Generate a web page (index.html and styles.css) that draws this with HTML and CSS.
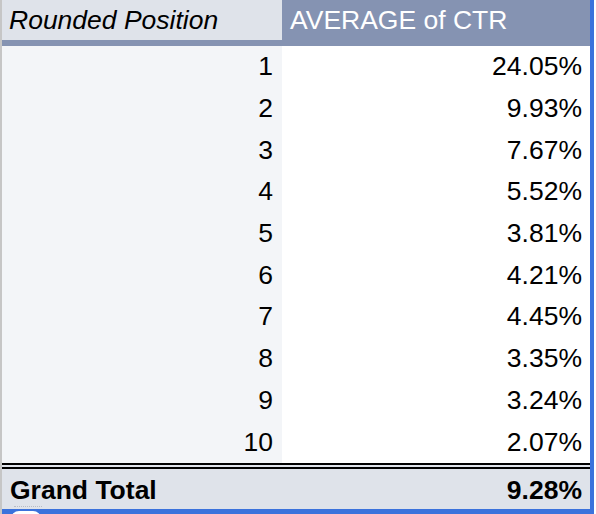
FILE: index.html
```html
<!DOCTYPE html>
<html>
<head>
<meta charset="utf-8">
<link rel="stylesheet" href="styles.css">
</head>
<body>
<div class="sheet">
  <div class="grid">
    <div class="head head-left">Rounded Position</div>
    <div class="head head-right">AVERAGE of CTR</div>

    <div class="cell key">1</div><div class="cell val">24.05%</div>
    <div class="cell key">2</div><div class="cell val">9.93%</div>
    <div class="cell key">3</div><div class="cell val">7.67%</div>
    <div class="cell key">4</div><div class="cell val">5.52%</div>
    <div class="cell key">5</div><div class="cell val">3.81%</div>
    <div class="cell key">6</div><div class="cell val">4.21%</div>
    <div class="cell key">7</div><div class="cell val">4.45%</div>
    <div class="cell key">8</div><div class="cell val">3.35%</div>
    <div class="cell key">9</div><div class="cell val">3.24%</div>
    <div class="cell key">10</div><div class="cell val">2.07%</div>

    <div class="total total-label">Grand Total</div>
    <div class="total total-val">9.28%</div>
  </div>
  <div class="dots"></div>
  <div class="handle"></div>
</div>
</body>
</html>
```

FILE: styles.css
```css
html, body {
  margin: 0;
  padding: 0;
  background: #ffffff;
}

body {
  font-family: "Liberation Sans", Arial, Helvetica, sans-serif;
  font-size: 26.5px;
  color: #000000;
  overflow: hidden;
}

.sheet {
  position: relative;
  width: 594px;
  height: 514px;
  box-sizing: border-box;
  border-left: 2px solid #c6c6c6;
}

.grid {
  display: grid;
  grid-template-columns: 280px 308px;
  grid-template-rows: 46px repeat(10, 41.7px) 46px;
  border-right: 4px solid #3b72dc;
  border-bottom: 5px solid #3b72dc;
}

.head {
  display: flex;
  align-items: center;
  box-sizing: border-box;
  padding: 0 8px;
  white-space: nowrap;
}

.head-left {
  background: #dfe3ea;
  border-bottom: 6px solid #8593b2;
  font-style: italic;
  padding-left: 7px;
}

.head-right {
  background: #8593b2;
  color: #ffffff;
  padding-bottom: 6px;
}

.cell {
  display: flex;
  align-items: center;
  justify-content: flex-end;
  padding-right: 8px;
  box-sizing: border-box;
}

.key {
  background: #f3f5f8;
  padding-right: 9px;
}

.val {
  background: #ffffff;
}

.total {
  display: flex;
  align-items: center;
  box-sizing: border-box;
  background: #dfe3ea;
  border-top: 6px double #000000;
  padding-top: 3px;
  font-weight: bold;
}

.total-label {
  padding-left: 8px;
}

.total-val {
  justify-content: flex-end;
  padding-right: 8px;
}

.dots {
  position: absolute;
  left: 12px;
  top: 506px;
  width: 28px;
  border-top: 1px dotted #b8bcc4;
}

.handle {
  position: absolute;
  left: 9px;
  top: 511px;
  width: 30px;
  height: 10px;
  background: #ffffff;
  border-radius: 8px 8px 0 0;
}
```
